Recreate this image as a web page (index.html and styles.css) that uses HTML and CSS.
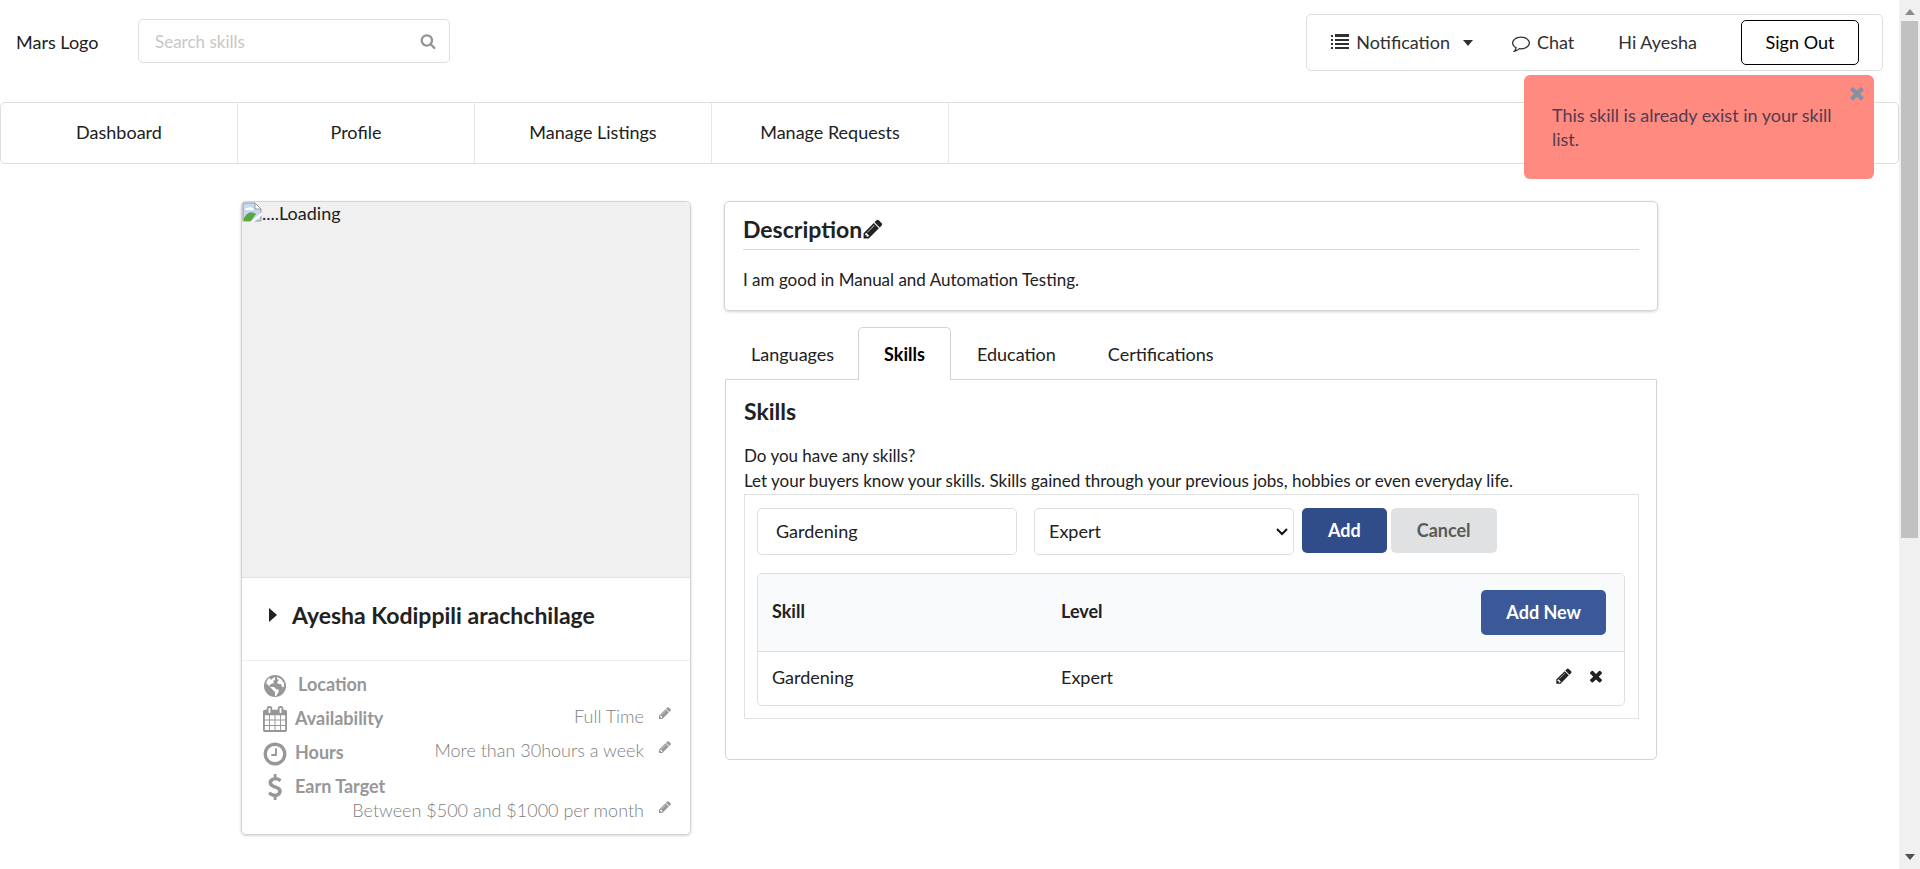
FILE: index.html
```html
<!DOCTYPE html>
<html lang="en">
<head>
<meta charset="utf-8">
<title>Profile</title>
<link rel="stylesheet" href="styles.css">
</head>
<body>
<svg class="sprite" aria-hidden="true">
  <symbol id="pencil" viewBox="0 0 1792 1792"><path d="M491 1536l91-91-235-235-91 91v107h128v128h107zm523-928q0-22-22-22-10 0-17 7l-542 542q-7 7-7 17 0 22 22 22 10 0 17-7l542-542q7-7 7-17zm-54-192l416 416-832 832h-416v-416zm683 96q0 53-37 90l-166 166-416-416 166-165q36-38 90-38 53 0 91 38l235 234q37 39 37 91z"/></symbol>
  <symbol id="times" viewBox="0 0 1792 1792"><path d="M1490 1322q0 40-28 68l-136 136q-28 28-68 28t-68-28l-294-294-294 294q-28 28-68 28t-68-28l-136-136q-28-28-28-68t28-68l294-294-294-294q-28-28-28-68t28-68l136-136q28-28 68-28t68 28l294 294 294-294q28-28 68-28t68 28l136 136q28 28 28 68t-28 68l-294 294 294 294q28 28 28 68z"/></symbol>
</svg>
<div class="window">
<div class="page">
  <header class="topbar">
    <a class="logo" href="#">Mars Logo</a>
    <form class="search">
      <input type="text" aria-label="Search skills" placeholder="Search skills">
      <svg class="i16" viewBox="0 0 1792 1792"><path d="M1216 832q0-185-131.5-316.5t-316.5-131.5-316.5 131.5-131.5 316.5 131.5 316.5 316.5 131.5 316.5-131.5 131.5-316.5zm512 832q0 52-38 90t-90 38q-54 0-90-38l-343-342q-179 124-399 124-143 0-273.5-55.5t-225-150-150-225-55.5-273.5 55.5-273.5 150-225 225-150 273.5-55.5 273.5 55.5 225 150 150 225 55.5 273.5q0 220-124 399l343 343q37 37 37 90z"/></svg>
    </form>
    <div class="account">
      <button class="notif" type="button">
        <svg class="i18" viewBox="0 0 18 18"><path d="M0 1h2v2H0zM4 0h14v3H4zM0 5h2v2H0zM4 5h14v2H4zM0 9h2v2H0zM4 9h14v2H4zM0 13h2v2H0zM4 13h14v2H4z"/></svg>
        Notification
        <svg class="caret" viewBox="0 0 10 6"><path d="M0 0h10L5 6z"/></svg>
      </button>
      <a class="chat" href="#"><svg class="i18" viewBox="0 0 1792 1792"><path d="M896 384q-204 0-381.5 69.5t-282 187.5-104.5 255q0 112 71.5 213.5t201.5 175.5l87 50-27 96q-24 91-70 172 152-63 275-171l43-38 57 6q69 8 130 8 204 0 381.5-69.5t282-187.5 104.5-255-104.5-255-282-187.5-381.5-69.5zm896 512q0 174-120 321.5t-326 233-450 85.5q-70 0-145-8-198 175-460 242-49 14-114 22h-5q-15 0-27-10.5t-16-27.5v-1q-3-4-.5-12t2-10 4.5-9.5l6-9 7-8.5 8-9q7-8 31-34.5t34.5-38 31-39.5 32.5-51 27-59 26-76q-157-89-247.5-220t-90.5-281q0-130 71-248.5t191-204.5 286-136.5 348-50.5 348 50.5 286 136.5 191 204.5 71 248.5z"/></svg>Chat</a>
      <span class="hi">Hi Ayesha</span>
      <button class="signout" type="button">Sign Out</button>
    </div>
  </header>
  <nav class="mainnav">
    <a href="#">Dashboard</a>
    <a href="#">Profile</a>
    <a href="#">Manage Listings</a>
    <a href="#">Manage Requests</a>
  </nav>
  <main class="content">
    <section class="card profile">
      <div class="photo">
        <svg class="broken" viewBox="0 0 20 20"><path d="M1 1h12l6 6v12H1z" fill="#c7d8f3" stroke="#9a9a9a"/><path d="M3 8q0-3 3-2 2-2 4 0 2 0 2 2z" fill="#fff"/><path d="M2 19v-3q5-9 12-4l-5 7z" fill="#59a83c"/><path d="M13 1v6h6z" fill="#fff" stroke="#9a9a9a"/><path d="M20 10v3L12 20H8z" fill="#fff"/></svg><span>....Loading</span>
      </div>
      <h1 class="name"><svg class="right" viewBox="0 0 8 14"><path d="M0 0l8 7-8 7z"/></svg>Ayesha Kodippili arachchilage</h1>
      <ul class="facts">
        <li><svg class="i24" viewBox="0 0 24 24"><circle cx="12" cy="12" r="11"/><path class="land" d="M3 9l2-4 2-1 1 2 2-2 2-1 0 3-2 1 1 2-3 1-2 2 2 1 3 0 2 2 3 1-1 3-2 3-1 0 0-4-3-3-2-2-2-2zM14 3l4 2 3 4 0 4-2 0-1-3-2 0-2-1 1-2 1-1-2-1z"/></svg><b class="loc">Location</b></li>
        <li><svg class="tall" viewBox="64 0 1664 1792"><path d="M192 1664h288v-288h-288v288zm352 0h320v-288h-320v288zm-352-352h288v-320h-288v320zm352 0h320v-320h-320v320zm-352-384h288v-288h-288v288zm736 736h320v-288h-320v288zm-384-736h320v-288h-320v288zm768 736h288v-288h-288v288zm-384-352h320v-320h-320v320zm-352-864v-288q0-13-9.5-22.5t-22.5-9.5h-64q-13 0-22.5 9.5t-9.5 22.5v288q0 13 9.5 22.5t22.5 9.5h64q13 0 22.5-9.5t9.5-22.5zm736 864h288v-320h-288v320zm-384-384h320v-288h-320v288zm384 0h288v-288h-288v288zm32-480v-288q0-13-9.5-22.5t-22.5-9.5h-64q-13 0-22.5 9.5t-9.5 22.5v288q0 13 9.5 22.5t22.5 9.5h64q13 0 22.5-9.5t9.5-22.5zm384-64v1280q0 52-38 90t-90 38h-1408q-52 0-90-38t-38-90v-1280q0-52 38-90t90-38h128v-96q0-66 47-113t113-47h64q66 0 113 47t47 113v96h384v-96q0-66 47-113t113-47h64q66 0 113 47t47 113v96h128q52 0 90 38t38 90z"/></svg><b>Availability</b><span class="value">Full Time <button type="button" aria-label="Edit availability"><svg><use href="#pencil"/></svg></button></span></li>
        <li><svg class="i24" viewBox="90 90 1612 1612"><path d="M1024 544v448q0 14-9 23t-23 9h-320q-14 0-23-9t-9-23v-64q0-14 9-23t23-9h224v-352q0-14 9-23t23-9h64q14 0 23 9t9 23zm416 352q0-148-73-273t-198-198-273-73-273 73-198 198-73 273 73 273 198 198 273 73 273-73 198-198 73-273zm224 0q0 209-103 385.5t-279.5 279.5-385.5 103-385.5-103-279.5-279.5-103-385.5 103-385.5 279.5-279.5 385.5-103 385.5 103 279.5 279.5 103 385.5z"/></svg><b>Hours</b><span class="value">More than 30hours a week <button type="button" aria-label="Edit hours"><svg><use href="#pencil"/></svg></button></span></li>
        <li class="earn"><svg class="tall" viewBox="64 0 1664 1792"><path d="M1362 1185q0 153-99.5 263.5t-258.5 136.5v175q0 14-9 23t-23 9h-135q-13 0-22.5-9.5t-9.5-22.5v-175q-66-9-127.5-31t-101.5-44.5-74-48-46.5-37.5-17.5-18q-17-21-2-41l103-135q7-10 23-12 15-2 24 9l2 2q113 99 243 125 37 8 74 8 81 0 142.5-43t61.5-122q0-28-15-53t-33.5-42-58.5-37.5-66-32-80-32.5q-39-16-61.5-25t-61.5-26.5-62.5-31-56.5-35.5-53.5-42.5-43.5-49-35.5-58-21-66.5-8.5-78q0-138 98-242t255-134v-180q0-13 9.5-22.5t22.5-9.5h135q14 0 23 9t9 23v176q57 6 110.5 23t87 33.5 63.5 37.5 39 29 15 14q17 18 5 38l-81 146q-8 15-23 16-14 3-27-7-3-3-14.5-12t-39-26.5-58.5-32-74.5-26-85.5-11.5q-95 0-155 43t-60 111q0 26 8.5 48t29.5 41.5 39.5 33 56 31 60.5 27 70 27.5q53 20 81 31.5t76 35 75.5 42.5 62 50 53 63.5 31.5 76.5 13 94z"/></svg><b>Earn Target</b><span class="value">Between $500 and $1000 per month <button type="button" aria-label="Edit earn target"><svg><use href="#pencil"/></svg></button></span></li>
      </ul>
    </section>
    <div class="details">
      <section class="card about">
        <h2>Description<button type="button" aria-label="Edit description"><svg><use href="#pencil"/></svg></button></h2>
        <p>I am good in Manual and Automation Testing.</p>
      </section>
      <div class="tabs">
        <a href="#">Languages</a>
        <a class="active" href="#">Skills</a>
        <a href="#">Education</a>
        <a href="#">Certifications</a>
      </div>
      <section class="panel">
        <h2>Skills</h2>
        <p>Do you have any skills?<br>Let your buyers know your skills. Skills gained through your previous jobs, hobbies or even everyday life.</p>
        <div class="editor">
          <form class="skillform">
            <input type="text" aria-label="Add skill" value="Gardening">
            <div class="picker">
              <select aria-label="Skill level"><option>Expert</option></select>
              <svg viewBox="0 0 12 8"><path d="M1 1l5 5 5-5" fill="none" stroke="#111" stroke-width="2"/></svg>
            </div>
            <div class="actions">
              <button class="btn add" type="button">Add</button>
              <button class="btn cancel" type="button">Cancel</button>
            </div>
          </form>
          <table class="skills">
            <thead><tr><th class="c1">Skill</th><th class="c2">Level</th><th class="c3"><button class="btn new" type="button">Add New</button></th></tr></thead>
            <tbody><tr><td>Gardening</td><td>Expert</td><td class="c3"><button class="icon" type="button" aria-label="Edit"><svg><use href="#pencil"/></svg></button><button class="icon" type="button" aria-label="Delete"><svg><use href="#times"/></svg></button></td></tr></tbody>
          </table>
        </div>
      </section>
    </div>
  </main>
  <div class="toast" role="alert">
    <button type="button" aria-label="Close"><svg><use href="#times"/></svg></button>
    This skill is already exist in your skill list.
  </div>
</div>
<div class="scroll">
  <svg viewBox="0 0 10 6"><path d="M0 6h10L5 0z" fill="#8b8b8b"/></svg>
  <span class="thumb"></span>
  <svg class="down" viewBox="0 0 10 6"><path d="M0 0h10L5 6z" fill="#505050"/></svg>
</div>
</div>
</body>
</html>
```
FILE: styles.css
```css
* { box-sizing: border-box; }
body {
  margin: 0;
  font-family: Lato, "Liberation Sans", sans-serif;
  font-size: 18px;
  line-height: 25px;
  color: #212121;
  background: #fff;
}
a { color: inherit; text-decoration: none; }
button, input, select { font: inherit; color: inherit; }
button { border: 0; padding: 0; background: none; cursor: pointer; }
h1, h2, p, ul { margin: 0; padding: 0; }
svg { display: block; fill: currentColor; flex: none; }
.sprite { position: absolute; width: 0; height: 0; }
.i16 { width: 16px; height: 16px; }
.i18 { width: 18px; height: 18px; }
.i24 { width: 24px; height: 24px; }
.tall { width: 24px; height: 26px; }
.land { fill: #fff; }

.window { display: flex; min-height: 100vh; }
.page { position: relative; flex: 1; min-width: 0; }
.scroll {
  width: 21px;
  padding: 9px 2px;
  display: flex;
  flex-direction: column;
  align-items: center;
  background: #f0f0f0;
}
.scroll svg { width: 10px; height: 6px; }
.scroll .thumb { width: 17px; height: 517px; margin-top: 6px; background: #c1c1c1; }
.scroll .down { margin-top: auto; }

.topbar { display: flex; padding: 14px 16px 0; height: 102px; align-items: flex-start; }
.logo { width: 122px; margin-top: 16px; }
.search {
  display: flex;
  align-items: center;
  width: 312px;
  height: 44px;
  margin-top: 5px;
  padding: 0 13px 0 16px;
  border: 1px solid #dededf;
  border-radius: 5px;
  color: #949494;
}
.search input { flex: 1; min-width: 0; border: 0; padding: 0; outline: 0; background: none; font-size: 17px; }
.search input::placeholder { color: #c7c7c7; }
.account {
  display: flex;
  align-items: center;
  height: 57px;
  margin-left: auto;
  padding: 0 23px 0 24px;
  border: 1px solid #dededf;
  border-radius: 5px;
  color: #303030;
}
.notif { display: flex; align-items: center; gap: 7px; margin-right: 39px; }
.caret { width: 10px; height: 6px; margin-left: 6px; }
.chat { display: flex; align-items: center; gap: 7px; margin-right: 44px; }
.hi { margin-right: 44px; }
.signout {
  width: 118px;
  height: 45px;
  border: 1px solid #000;
  border-radius: 5px;
  color: #000;
}

.mainnav { display: flex; height: 62px; border: 1px solid #dededf; border-radius: 5px; }
.mainnav a {
  width: 237px;
  display: flex;
  align-items: center;
  justify-content: center;
  padding-bottom: 2px;
  border-right: 1px solid #e8e8e8;
}

.content {
  display: grid;
  grid-template-columns: 450fr 934fr;
  gap: 33px;
  align-items: start;
  max-width: 1417px;
  margin: 37px auto 0;
}
.card { border: 1px solid #d4d4d5; border-radius: 5px; box-shadow: 0 1px 3px #d4d4d5; }
.photo { display: flex; height: 375px; background: #f0f0f0; border-radius: 4px 4px 0 0; line-height: 23px; }
.broken { width: 20px; height: 20px; }
.name {
  display: flex;
  align-items: center;
  height: 84px;
  padding: 0 27px 8px;
  border-top: 1px solid #e2e2e2;
  border-bottom: 1px solid #efefef;
  font-size: 23px;
  line-height: 30px;
}
.right { width: 8px; height: 14px; margin-right: 15px; }
.facts { list-style: none; padding: 7px 18px 11px 21px; color: #979797; }
.facts li { display: flex; height: 34px; }
.facts .i24, .facts .tall { margin: 6px 8px 0 0; }
.facts .tall { margin-top: 4px; }
.facts b { margin-top: 4px; }
.facts .loc { margin-left: 3px; }
.facts .value { display: flex; margin: 2px 0 0 auto; font-weight: 300; color: #808080; }
.value button { display: flex; align-items: flex-start; padding-top: 2px; margin-left: 14px; color: #979797; }
.value svg { width: 14px; height: 14px; }
.facts .earn { flex-wrap: wrap; height: auto; }
.earn .value { width: 100%; justify-content: flex-end; margin: -2px 0 0; }

.about { height: 110px; padding: 11px 18px; }
h2 { font-size: 23px; line-height: 30px; }
.about h2 { display: flex; align-items: center; height: 37px; padding-bottom: 4px; border-bottom: 1px solid #d9d9d9; }
.about h2 svg { width: 22px; height: 22px; }
p { font-size: 17px; }
.about p { margin-top: 17px; }

.tabs { display: flex; margin: 16px 0 0 1px; }
.tabs a { padding: 14px 25px; height: 52px; border: 1px solid transparent; border-bottom: 0; }
.tabs a:first-child { padding-right: 23px; }
.tabs a.active {
  position: relative;
  margin-bottom: -1px;
  height: 53px;
  border-color: #d4d4d5;
  border-radius: 5px 5px 0 0;
  background: #fff;
  font-weight: bold;
  color: #000;
}
.panel { margin: 0 1px; padding: 16px 17px 40px 18px; min-height: 381px; border: 1px solid #d4d4d5; border-radius: 0 0 5px 5px; }
.panel p { margin-top: 17px; }
.editor { margin-top: 1px; padding: 13px 13px 12px 12px; border: 1px solid #e2e2e3; }
.skillform { display: flex; align-items: flex-start; }
.skillform input, .skillform select {
  width: 260px;
  height: 47px;
  border: 1px solid #dededf;
  border-radius: 5px;
  padding: 0 18px 2px;
  background: #fff;
}
.picker { display: grid; align-items: center; margin: 0 8px 0 17px; }
.picker select { grid-area: 1 / 1; appearance: none; padding: 0 14px; }
.picker svg { grid-area: 1 / 1; justify-self: end; width: 12px; height: 8px; margin-right: 6px; pointer-events: none; }
.actions { display: flex; gap: 4px; }
.btn { height: 45px; padding: 0 26px; border-radius: 5px; font-weight: bold; color: #fff; }
.add { background: #304d8a; }
.cancel { background: #e0e1e2; color: #5a5a5a; }
.new { padding: 0 25px; background: #3b5998; }
.skills {
  width: 100%;
  margin-top: 18px;
  border: 1px solid #dededf;
  border-radius: 5px;
  border-spacing: 0;
  text-align: left;
  table-layout: fixed;
}
.skills th { height: 78px; padding: 0 14px 2px; background: #f9fafb; border-bottom: 1px solid #dededf; }
.skills th:first-child { border-top-left-radius: 4px; }
.skills th:last-child { border-top-right-radius: 4px; padding-bottom: 0; }
.skills td { height: 53px; padding: 0 14px 2px; }
.skills .c1, .skills .c2 { width: 289px; }
.skills .c3 { text-align: right; padding-right: 18px; }
.skills td.c3 { padding-bottom: 0; padding-right: 19px; }
.icon svg { width: 18px; height: 18px; }
.icon + .icon { margin-left: 14px; }

.toast {
  position: absolute;
  top: 75px;
  right: 25px;
  width: 350px;
  height: 104px;
  padding: 28px;
  border-radius: 6px;
  background: #ff8a80;
  color: #533c50;
  line-height: 24px;
}
.toast button { position: absolute; top: 8px; right: 7px; color: #8092a4; }
.toast svg { width: 20px; height: 20px; }
```
